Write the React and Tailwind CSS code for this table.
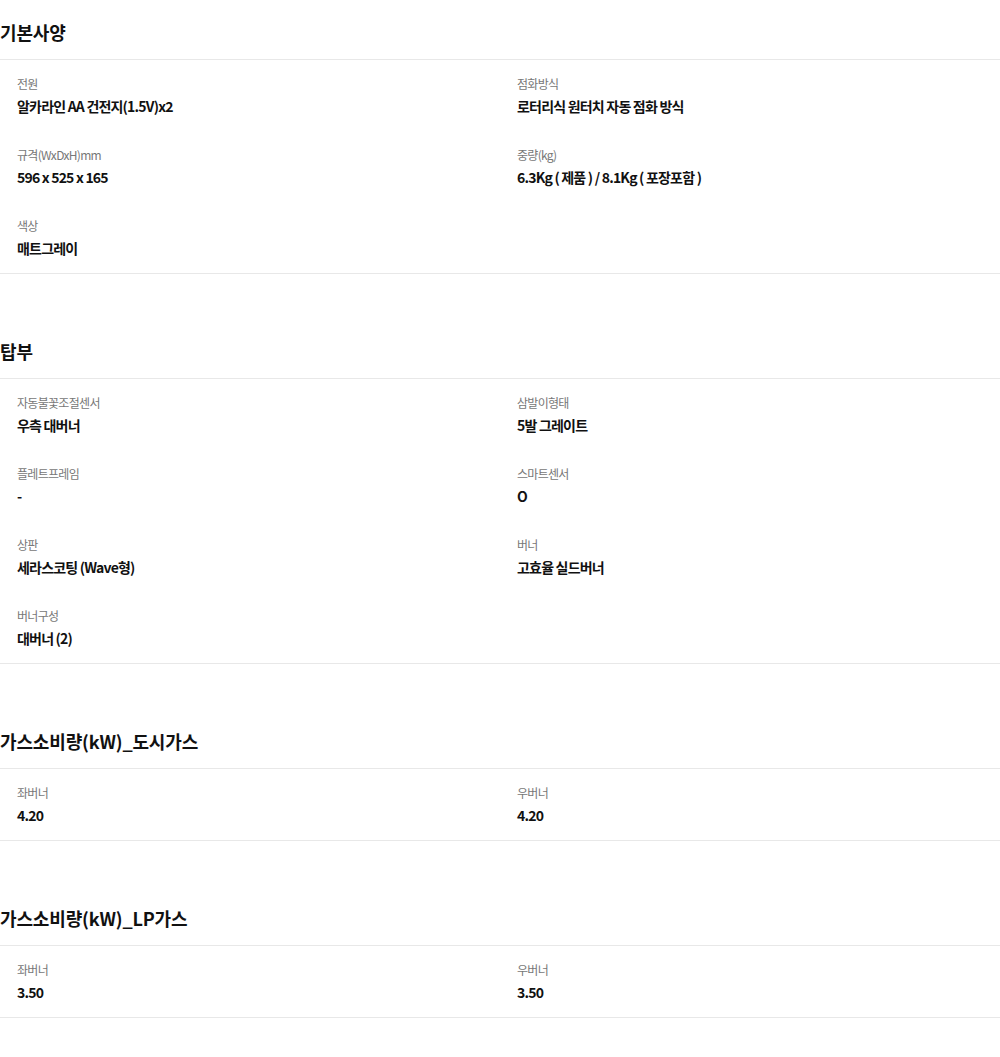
import React from "react";

const sections = [
  {
    title: "기본사양",
    items: [
      ["전원", "알카라인 AA 건전지(1.5V)x2"],
      ["점화방식", "로터리식 원터치 자동 점화 방식"],
      ["규격(WxDxH)mm", "596 x 525 x 165"],
      ["중량(kg)", "6.3Kg ( 제품 ) / 8.1Kg ( 포장포함 )"],
      ["색상", "매트그레이"],
    ],
  },
  {
    title: "탑부",
    items: [
      ["자동불꽃조절센서", "우측 대버너"],
      ["삼발이형태", "5발 그레이트"],
      ["플레트프레임", "-"],
      ["스마트센서", "O"],
      ["상판", "세라스코팅 (Wave형)"],
      ["버너", "고효율 실드버너"],
      ["버너구성", "대버너 (2)"],
    ],
  },
  {
    title: "가스소비량(kW)_도시가스",
    items: [
      ["좌버너", "4.20"],
      ["우버너", "4.20"],
    ],
  },
  {
    title: "가스소비량(kW)_LP가스",
    items: [
      ["좌버너", "3.50"],
      ["우버너", "3.50"],
    ],
  },
];

export default function App() {
  return (
    <div
      className="w-[1000px] bg-white text-[#111] flex flex-col gap-[45px]"
      style={{ fontFamily: '"Noto Sans CJK KR", "Noto Sans", sans-serif' }}
    >
      {sections.map((s, i) => (
        <section key={i} className="pt-[13px]">
          <h2 className="text-[18px] leading-[38px] font-bold tracking-[-0.15px] pb-[8px] border-b border-[#e8e8e8]">
            {s.title}
          </h2>
          <div className="grid grid-cols-2 gap-y-[30px] border-b border-[#e8e8e8] pt-[15px] pb-[15px]">
            {s.items.map(([k, v], j) => (
              <div key={j} className="pl-[17px] flex flex-col">
                <div className="text-[12px] leading-[17px] tracking-[-0.7px] text-[#777]">{k}</div>
                <div className="mt-[4px] text-[14px] leading-[20px] font-bold tracking-[-0.8px] text-[#111]">{v}</div>
              </div>
            ))}
          </div>
        </section>
      ))}
    </div>
  );
}
